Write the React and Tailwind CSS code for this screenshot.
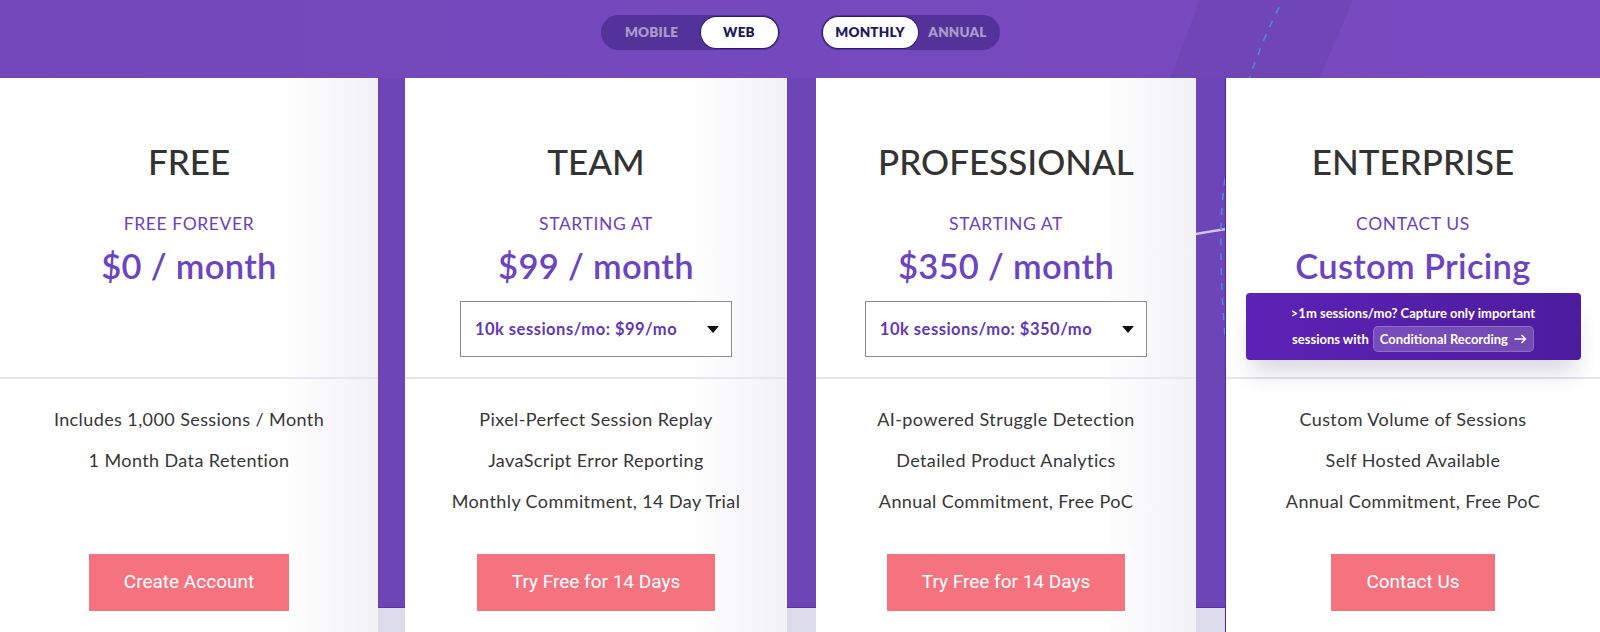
const PLANS = [
  {
    name: 'FREE',
    label: 'FREE FOREVER',
    price: '$0 / month',
    features: ['Includes 1,000 Sessions / Month', '1 Month Data Retention'],
    cta: 'Create Account',
    width: 'w-[378px]',
  },
  {
    name: 'TEAM',
    label: 'STARTING AT',
    price: '$99 / month',
    select: '10k sessions/mo: $99/mo',
    features: ['Pixel-Perfect Session Replay', 'JavaScript Error Reporting', 'Monthly Commitment, 14 Day Trial'],
    cta: 'Try Free for 14 Days',
    width: 'w-[382px] ml-[27px]',
  },
  {
    name: 'PROFESSIONAL',
    label: 'STARTING AT',
    price: '$350 / month',
    select: '10k sessions/mo: $350/mo',
    features: ['AI-powered Struggle Detection', 'Detailed Product Analytics', 'Annual Commitment, Free PoC'],
    cta: 'Try Free for 14 Days',
    width: 'w-[380px] ml-[29px]',
  },
  {
    name: 'ENTERPRISE',
    label: 'CONTACT US',
    price: 'Custom Pricing',
    enterprise: true,
    features: ['Custom Volume of Sessions', 'Self Hosted Available', 'Annual Commitment, Free PoC'],
    cta: 'Contact Us',
    width: 'w-[375px] ml-[29px]',
  },
];

const Toggle = ({ left, right, active }) => (
  <div className="flex h-[35px] items-center rounded-full bg-[#53339a] p-[2px] text-[13.5px] font-extrabold tracking-[0.2px]">
    {[left, right].map((opt) => (
      <span
        key={opt.text}
        className={`flex h-[31px] items-center justify-center rounded-full ${opt.w} ${active === opt.text
          ? 'bg-white text-[#1d1b5e] shadow-[0_0_0_1px_#2a1f6a]'
          : 'text-[#a99cc9]'
          }`}
      >
        {opt.text}
      </span>
    ))}
  </div>
);

const Decor = () => (
  <svg className="pointer-events-none absolute left-0 top-0 z-[1]" width="1600" height="632">
    <polygon points="1200,0 1353,0 1320,78 1170,78" fill="#000" fillOpacity="0.05" />
    <path d="M1120 250 Q1190 232 1280 222" stroke="#cfc6ea" strokeWidth="2.5" fill="none" />
    <path
      d="M1286 -6 C1250 60, 1222 150, 1221 230 S1228 360, 1234 430"
      stroke="#3f93e6"
      strokeWidth="1.5"
      strokeDasharray="7 8"
      fill="none"
    />
  </svg>
);

const Card = ({ plan }) => (
  <div
    className={`${plan.width} flex h-[560px] shrink-0 flex-col ${plan.enterprise
      ? 'border-l border-[#5a22b4] bg-white'
      : 'bg-[linear-gradient(to_right,#ffffff_74%,#f2f2f6)]'
      }`}
  >
    <div className="flex h-[299px] flex-col items-center pt-[63px]">
      <h2 className="text-[35px] font-medium leading-[40px] text-[#333333]">{plan.name}</h2>
      <p className="mt-[31px] text-[17.5px] leading-[24px] tracking-[0.6px] text-[#6c3fc4]">{plan.label}</p>
      <p className="mt-[10px] text-[34.5px] font-semibold leading-[40px] tracking-[0.3px] text-[#6b44c1]">{plan.price}</p>
      {plan.select && (
        <div className="mt-[15px] flex h-[56px] items-center gap-[30px] border border-[#8c8c8c] bg-white pl-[14px] pr-[12px]">
          <span className="text-[16.5px] font-bold tracking-[0.5px] text-[#6138b9]">{plan.select}</span>
          <svg width="12" height="7" viewBox="0 0 12 7"><path d="M0 0h12L6 7z" fill="#111" /></svg>
        </div>
      )}
      {plan.enterprise && (
        <div className="relative mt-[7px] w-[335px] rounded-[4px] bg-[linear-gradient(to_right,#5c22b5,#4d1c9e)] px-3 pb-[8px] pt-[8px] text-center text-[13px] font-bold leading-[25px] text-white shadow-[0_18px_24px_-6px_rgba(40,20,90,0.18)]">
          <div>&gt;1m sessions/mo? Capture only important</div>
          <div className="flex items-center justify-center gap-[4px]">
            <span>sessions with</span>
            <span className="flex h-[26px] items-center gap-[6px] rounded-[5px] border border-white/20 bg-white/20 px-[6px]">
              Conditional Recording
              <svg width="13" height="10" viewBox="0 0 13 10" fill="none" stroke="#fff" strokeWidth="1.4">
                <path d="M0.5 5h11M7.5 1l4 4-4 4" />
              </svg>
            </span>
          </div>
        </div>
      )}
    </div>
    <div className="h-[177px] border-t-2 border-[#e6e5f0] pt-[20px] text-center text-[18px] leading-[41px] tracking-[0.4px] text-[#363636]">
      {plan.features.map((f) => (
        <p key={f}>{f}</p>
      ))}
    </div>
    <div className="flex justify-center">
      <button
        type="button"
        className="h-[57px] bg-[#f4737f] px-[35px] font-['Roboto',sans-serif] text-[19px] text-white"
      >
        {plan.cta}
      </button>
    </div>
  </div>
);

export default function App() {
  return (
    <div className="relative h-[632px] w-[1600px] overflow-hidden bg-[linear-gradient(to_bottom,#6e45b6_607px,#5a2fa8_607px,#5a2fa8_608px,#dcdbe9_608px)] font-['Lato',sans-serif]">
      <div className="relative flex h-[78px] justify-center gap-[41px] bg-[linear-gradient(to_right,#7248ba,#784ac1)] pt-[15px]">
        <Toggle
          left={{ text: 'MOBILE', w: 'w-[98px]' }}
          right={{ text: 'WEB', w: 'w-[77px]' }}
          active="WEB"
        />
        <Toggle
          left={{ text: 'MONTHLY', w: 'w-[95px]' }}
          right={{ text: 'ANNUAL', w: 'w-[80px]' }}
          active="MONTHLY"
        />
      </div>
      <Decor />
      <div className="relative z-[2] flex">
        {PLANS.map((plan) => (
          <Card key={plan.name} plan={plan} />
        ))}
      </div>
    </div>
  );
}
